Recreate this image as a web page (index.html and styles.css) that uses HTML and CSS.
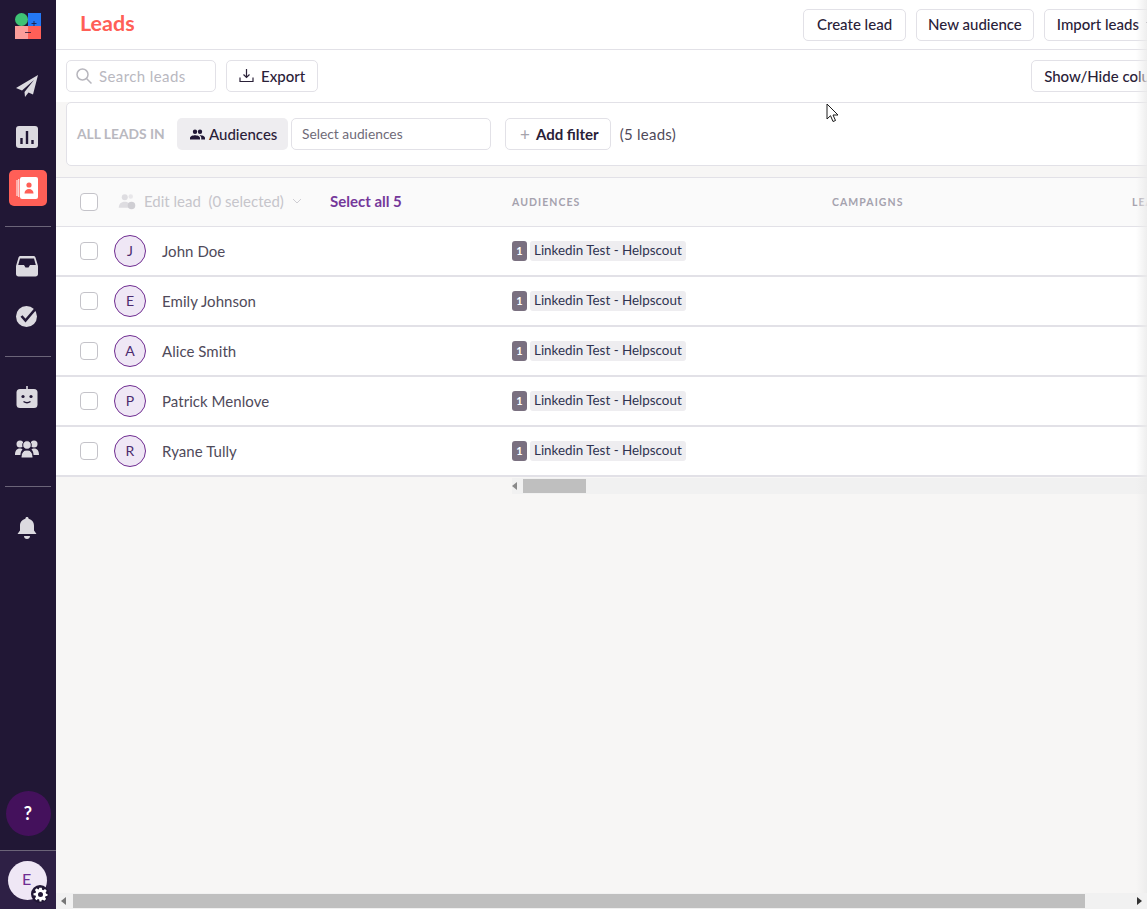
FILE: index.html
```html
<!DOCTYPE html>
<html lang="en">
<head>
    <meta charset="UTF-8">
    <meta name="viewport" content="width=device-width, initial-scale=1.0">
    <title>Leads</title>
    <link rel="stylesheet" href="styles.css">
</head>
<body>
<div class="app">
    <nav class="sidebar">
        <div class="logo">
            <svg width="26" height="26" viewBox="0 0 26 26">
                <rect x="0" y="13" width="13" height="13" fill="#fb9d9a"/>
                <rect x="13" y="13" width="13" height="13" fill="#ff5f57"/>
                <rect x="13" y="0" width="13" height="13" fill="#2478f5"/>
                <circle cx="6.500" cy="6.500" r="6.500" fill="#3ec274"/>
                <path d="M19 8v5M16.500 10.500h5M10 19.500h6" stroke="#211735" stroke-width="0.800" fill="none"/>
            </svg>
        </div>
        <div class="nav-group nav-group-first">
            <a class="nav-item">
                <svg width="24" height="24" viewBox="0 0 24 24"><path fill="#dcdae0" d="M23 1 1 14l6 2.500L19 6 9.500 18 10 23l3.500-4.500 4.500 2z"/></svg>
            </a>
            <a class="nav-item">
                <svg width="24" height="24" viewBox="0 0 24 24"><rect x="1" y="1" width="22" height="22" rx="3" fill="#dcdae0"/><path d="M6.500 19v-6M12 19V6M17.500 19v-4" stroke="#211735" stroke-width="2.400" fill="none"/></svg>
            </a>
            <a class="nav-item">
                <span class="nav-active">
                    <svg width="24" height="24" viewBox="0 0 24 24"><rect x="4" y="1" width="18" height="22" rx="2" fill="#fff"/><path d="M1 4v16M2.800 3v18" stroke="#fff" stroke-width="1"/><circle cx="13" cy="9" r="2.600" fill="#ff5f57"/><path d="M8.500 17.500c0-3 2-4.500 4.500-4.500s4.500 1.500 4.500 4.500z" fill="#ff5f57"/></svg>
                </span>
            </a>
        </div>
        <div class="nav-group nav-group-second">
            <a class="nav-item nav-item-short">
                <svg width="24" height="24" viewBox="0 0 24 24"><path fill="#dcdae0" d="M5.500 2h13c1 0 1.700.6 2 1.500L23 12v8c0 1.500-1 2.500-2.500 2.500h-17C2 22.500 1 21.500 1 20v-8l2.500-8.500C3.800 2.600 4.500 2 5.500 2zM5 4.500 3.200 11H9l1.500 2.500h3L15 11h5.800L19 4.500z"/></svg>
            </a>
            <a class="nav-item nav-item-short">
                <svg width="24" height="24" viewBox="0 0 24 24"><circle cx="11.500" cy="12.500" r="10.500" fill="#dcdae0"/><path d="m6.500 12 4 4.500L22.500 2.500" stroke="#211735" stroke-width="2.600" fill="none"/></svg>
            </a>
        </div>
        <div class="nav-group nav-group-third">
            <a class="nav-item">
                <svg width="24" height="24" viewBox="0 0 24 24"><rect x="11.200" y="0" width="1.600" height="4" fill="#dcdae0"/><rect x="1.500" y="3" width="21" height="19" rx="3.500" fill="#dcdae0"/><circle cx="8" cy="10.500" r="1.600" fill="#211735"/><circle cx="16" cy="10.500" r="1.600" fill="#211735"/><path d="M8.500 15.500c2 1.500 5 1.500 7 0" stroke="#211735" stroke-width="1.400" fill="none"/></svg>
            </a>
            <a class="nav-item">
                <svg width="24" height="24" viewBox="0 0 24 24"><circle cx="5" cy="7" r="3.500" fill="#dcdae0"/><circle cx="19" cy="7" r="3.500" fill="#dcdae0"/><path d="M0 18c0-4 1.500-6.500 5-6.500 1 0 2 .2 2.500.7C6 14 5.500 16 5.500 18zM24 18c0-4-1.500-6.500-5-6.500-1 0-2 .2-2.500.7 1.500 1.800 2 3.800 2 5.800z" fill="#dcdae0"/><circle cx="12" cy="8" r="4.300" stroke="#211735" fill="#dcdae0"/><path d="M6 21c0-5 2-8 6-8s6 3 6 8z" stroke="#211735" fill="#dcdae0"/></svg>
            </a>
        </div>
        <div class="nav-group nav-group-last">
            <a class="nav-item">
                <svg width="24" height="24" viewBox="0 0 24 24"><path fill="#dcdae0" d="M12 1c1 0 1.600.7 1.600 1.700 3.400.8 5.400 3.500 5.400 7v4.800l2.500 3.500H2.500L5 14.500V9.700c0-3.500 2-6.200 5.400-7C10.400 1.700 11 1 12 1zM9 20h6c0 1.700-1.300 3-3 3s-3-1.300-3-3z"/></svg>
            </a>
        </div>
        <div class="help-wrap">
            <span class="help">?</span>
        </div>
        <div class="user-box">
            <span class="user-avatar">E</span>
            <span class="user-gear">
                <svg width="15" height="15" viewBox="0 0 24 24"><path fill="#fff" fill-rule="evenodd" d="M10 1h4l.6 3.200 1.900.8 2.700-1.800 2.800 2.800-1.800 2.700.8 1.900L23.200 11v3l-3.200.6-.8 1.900 1.800 2.700-2.800 2.800-2.700-1.800-1.900.8L13.500 23h-3l-.6-3-1.900-.8-2.700 1.800L3 18.200l1.800-2.700-.8-1.900L.8 13V10l3.200-.6.8-1.900L3 4.800 5.800 2l2.700 1.800 1-.6zM12 8a4 4 0 1 0 0 8 4 4 0 0 0 0-8z"/></svg>
            </span>
        </div>
    </nav>

    <main class="main">
        <div class="content">
            <header class="topbar">
                <h1>Leads</h1>
                <div class="topbar-actions">
                    <button class="btn btn-create">Create lead</button>
                    <button class="btn btn-audience">New audience</button>
                    <button class="btn btn-import">Import leads
                        <svg width="10" height="6" viewBox="0 0 10 6"><path d="m1 1 4 4 4-4" fill="none" stroke="#2a2138"/></svg>
                    </button>
                </div>
            </header>

            <div class="tools">
                <div class="search">
                    <svg width="18" height="18" viewBox="0 0 18 18"><circle cx="7.500" cy="7.500" r="5.500" fill="none" stroke="#b7b6bd" stroke-width="1.500"/><path d="m11.500 11.500 5 5" stroke="#b7b6bd" stroke-width="1.500"/></svg>
                    <span>Search leads</span>
                </div>
                <button class="btn btn-tool">
                    <svg width="15" height="15" viewBox="0 0 15 15"><path d="M7.500 1v8M4.500 6.500l3 3 3-3M1 9.500V13.500h13V9.500" fill="none" stroke="#2a2138" stroke-width="1.200"/></svg>
                    Export
                </button>
                <button class="btn btn-tool btn-columns">Show/Hide columns</button>
            </div>

            <section class="filters">
                <span class="filters-label">ALL LEADS IN</span>
                <span class="filter-type">
                    <svg width="15" height="15" viewBox="0 0 24 24"><path fill="#211735" d="M16 11a3.500 3.500 0 1 0 0-7 3.500 3.500 0 0 0 0 7zM8 11a3.500 3.500 0 1 0 0-7 3.500 3.500 0 0 0 0 7zm0 2c-2.700 0-8 1.300-8 4v3h16v-3c0-2.700-5.300-4-8-4zm8 0h-1c1.500 1 3 2.300 3 4v3h6v-3c0-2.700-5.300-4-8-4z"/></svg>
                    Audiences
                </span>
                <span class="filter-select">Select audiences</span>
                <button class="btn btn-filter"><span class="plus">+</span> Add filter</button>
                <span class="filter-count">(5 leads)</span>
            </section>

            <section class="table">
                <div class="row row-head">
                    <span class="check"></span>
                    <span class="bulk">
                        <svg width="18" height="18" viewBox="0 0 24 24"><circle cx="9" cy="7" r="4" fill="#dedde1"/><circle cx="17" cy="6" r="3" fill="#e8e7ea"/><path d="M1 21c0-5 3-8 8-8s8 3 8 8z" fill="#dedde1"/><circle cx="18" cy="18" r="5" fill="#cfced3"/></svg>
                        Edit lead &nbsp;(0 selected)
                        <svg width="10" height="6" viewBox="0 0 10 6"><path d="m1 1 4 4 4-4" fill="none" stroke="#cfced3"/></svg>
                    </span>
                    <a class="select-all">Select all 5</a>
                    <span class="col-head col-audiences">AUDIENCES</span>
                    <span class="col-head col-campaigns">CAMPAIGNS</span>
                    <span class="col-head">LEAD STATUS</span>
                </div>

                <div class="row">
                    <span class="check"></span>
                    <span class="avatar">J</span>
                    <span class="name">John Doe</span>
                    <span class="audience"><b>1</b><em>Linkedin Test - Helpscout</em></span>
                </div>
                <div class="row">
                    <span class="check"></span>
                    <span class="avatar">E</span>
                    <span class="name">Emily Johnson</span>
                    <span class="audience"><b>1</b><em>Linkedin Test - Helpscout</em></span>
                </div>
                <div class="row">
                    <span class="check"></span>
                    <span class="avatar">A</span>
                    <span class="name">Alice Smith</span>
                    <span class="audience"><b>1</b><em>Linkedin Test - Helpscout</em></span>
                </div>
                <div class="row">
                    <span class="check"></span>
                    <span class="avatar">P</span>
                    <span class="name">Patrick Menlove</span>
                    <span class="audience"><b>1</b><em>Linkedin Test - Helpscout</em></span>
                </div>
                <div class="row">
                    <span class="check"></span>
                    <span class="avatar">R</span>
                    <span class="name">Ryane Tully</span>
                    <span class="audience"><b>1</b><em>Linkedin Test - Helpscout</em></span>
                </div>
            </section>

            <div class="table-scroll">
                <span class="arrow-left"></span>
                <span class="table-thumb"></span>
            </div>
        </div>

        <div class="page-scroll">
            <span class="arrow-left"></span>
            <span class="page-thumb"></span>
            <span class="arrow-right"></span>
        </div>
    </main>
</div>

<div class="edge-fade"></div>
<svg class="cursor" width="13" height="20" viewBox="0 0 13 20"><path d="M1 1v15l3.500-3.300L7 18.500l2.500-1L7 12h5z" fill="#fff" stroke="#1a1a1a" stroke-width="1"/></svg>
</body>
</html>
```

FILE: styles.css
```css
:root {
    --dark: #211735;
    --text: #2a2138;
    --muted: #4f4a5a;
    --line: #e2e1e7;
    --coral: #ff5f57;
    --purple: #6f2c91;
}

html, body {
    height: 100%;
    margin: 0;
    overflow: hidden;
}

body {
    font-family: Lato, "Open Sans", sans-serif;
    font-size: 14px;
    color: var(--text);
    background-color: #f7f6f5;
}

.app {
    display: flex;
    height: 100%;
}

/* left menu */
.sidebar {
    display: flex;
    flex-direction: column;
    flex: 0 0 56px;
    background-color: var(--dark);
}

.logo {
    display: flex;
    justify-content: center;
    height: 47px;
    padding-top: 13px;
    box-sizing: border-box;
}

.nav-group {
    margin: 0 5px;
    border-bottom: 1px solid #6b6478;
}

.nav-group-first {
    padding: 13px 0;
}

.nav-group-second {
    padding: 14px 0 15px;
}

.nav-group-third {
    padding: 15px 0 12px;
}

.nav-group-last {
    padding-top: 15px;
    border-bottom: none;
}

.nav-item {
    display: flex;
    justify-content: center;
    align-items: center;
    height: 51px;
    margin: 0 -1px;
}

.nav-item-short {
    height: 50px;
}

.nav-item > svg {
    margin-right: 2px;
}

.nav-active {
    display: flex;
    justify-content: center;
    align-items: center;
    width: 38px;
    height: 36px;
    border-radius: 5px;
    background-color: var(--coral);
}

.help-wrap {
    display: flex;
    justify-content: center;
    margin-top: auto;
    padding-bottom: 14px;
}

.help {
    width: 45px;
    height: 45px;
    line-height: 45px;
    border-radius: 50%;
    background-color: #44115c;
    color: #fff;
    font-weight: 700;
    font-size: 18px;
    text-align: center;
}

.user-box {
    position: relative;
    height: 59px;
    padding: 10px 0 0 8px;
    box-sizing: border-box;
    background-color: #2e2045;
    border-top: 1px solid #6b6478;
}

.user-avatar {
    display: block;
    width: 39px;
    height: 39px;
    line-height: 36px;
    border-radius: 50%;
    background-color: #efe7f5;
    color: var(--purple);
    font-size: 16px;
    text-indent: -2px;
    text-align: center;
}

.user-gear {
    position: absolute;
    left: 31px;
    bottom: 6px;
    display: flex;
    justify-content: center;
    align-items: center;
    width: 18px;
    height: 18px;
    border-radius: 50%;
    background-color: var(--dark);
}

/* main area */
.main {
    display: flex;
    flex-direction: column;
    flex: 1;
    min-width: 0;
    overflow: hidden;
}

.content {
    flex: 1;
    width: 1320px;
}

.topbar {
    display: flex;
    align-items: center;
    height: 50px;
    box-sizing: border-box;
    padding-left: 24px;
    background-color: #fff;
    border-bottom: 1px solid var(--line);
}

h1 {
    flex: 0 0 723px;
    margin: 0 0 3px;
    color: var(--coral);
    font-size: 21.500px;
    font-weight: 700;
}

.topbar-actions {
    display: flex;
    gap: 10px;
}

.btn {
    display: inline-flex;
    align-items: center;
    justify-content: center;
    height: 32px;
    padding: 0 12px 1px;
    box-sizing: border-box;
    background-color: #fff;
    border: 1px solid var(--line);
    border-radius: 5px;
    color: var(--text);
    font-family: inherit;
    font-size: 15px;
    font-weight: 500;
    white-space: nowrap;
}

.btn-create {
    padding: 0 13px 2px;
}

.btn-audience {
    padding: 0 11px 2px;
}

.btn-import {
    gap: 6px;
    padding-bottom: 2px;
}

.tools {
    display: flex;
    align-items: center;
    height: 52px;
    box-sizing: border-box;
    padding: 10px 0 10px 10px;
    background-color: #fff;
}

.search {
    display: flex;
    align-items: center;
    gap: 6px;
    width: 150px;
    height: 32px;
    box-sizing: border-box;
    padding-left: 8px;
    border: 1px solid var(--line);
    border-radius: 5px;
    color: #b9b8bf;
    font-size: 15px;
    letter-spacing: 0.400px;
}

.btn-tool {
    gap: 7px;
    margin-left: 10px;
}

.btn-columns {
    margin-left: 713px;
}

.filters {
    display: flex;
    align-items: center;
    height: 64px;
    box-sizing: border-box;
    margin-left: 10px;
    padding-left: 10px;
    background-color: #fff;
    border: 1px solid var(--line);
    border-radius: 5px;
}

.filters-label {
    width: 100px;
    padding-bottom: 1px;
    color: #b9b8bf;
    font-weight: 700;
    font-size: 13.800px;
}

.filter-type {
    display: flex;
    align-items: center;
    gap: 4px;
    width: 111px;
    height: 32px;
    box-sizing: border-box;
    padding-left: 13px;
    border-radius: 5px;
    background-color: #eeedf0;
    font-size: 15px;
    font-weight: 500;
}

.filter-select {
    display: flex;
    align-items: center;
    width: 200px;
    height: 32px;
    box-sizing: border-box;
    margin-left: 3px;
    padding: 0 0 1px 10px;
    border: 1px solid var(--line);
    border-radius: 5px;
    color: #6f6b78;
    font-size: 13.800px;
}

.btn-filter {
    gap: 6px;
    margin-left: 14px;
    padding: 0 11px 0 14px;
    font-weight: 700;
}

.plus {
    color: #a5a4ac;
    font-size: 17px;
    font-weight: 400;
}

.filter-count {
    margin-left: 9px;
    color: var(--muted);
    font-size: 15px;
    letter-spacing: 0.250px;
}

/* leads table */
.table {
    margin-top: 11px;
    background-color: #fff;
    border-top: 1px solid var(--line);
}

.row {
    display: flex;
    align-items: center;
    height: 50px;
    box-sizing: border-box;
    padding-left: 24px;
    border-bottom: 2px solid var(--line);
}

.row-head {
    height: 49px;
    background-color: #fafafa;
    border-bottom-width: 1px;
}

.check {
    flex: 0 0 18px;
    height: 18px;
    box-sizing: border-box;
    border: 1px solid #c4c3c9;
    border-radius: 4px;
    background-color: #fff;
}

.bulk {
    display: flex;
    align-items: center;
    gap: 8px;
    width: 212px;
    margin-left: 20px;
    padding-bottom: 2px;
    color: #c6c5cb;
    font-size: 15px;
}

.select-all {
    width: 182px;
    padding-bottom: 2px;
    color: #75389a;
    font-size: 15px;
    font-weight: 700;
}

.col-head {
    color: #a5a2ae;
    font-size: 10.500px;
    font-weight: 700;
    letter-spacing: 1.050px;
    white-space: nowrap;
}

.col-audiences {
    width: 320px;
}

.col-campaigns {
    width: 300px;
}

.avatar {
    flex: 0 0 32px;
    height: 32px;
    box-sizing: border-box;
    margin-left: 16px;
    line-height: 30px;
    border: 1px solid var(--purple);
    border-radius: 50%;
    background-color: #efe7f5;
    color: #4b2a6e;
    font-size: 14px;
    text-align: center;
}

.name {
    width: 350px;
    margin-left: 16px;
    padding-bottom: 1px;
    color: var(--muted);
    font-size: 15px;
    letter-spacing: 0.050px;
}

.audience {
    display: flex;
    align-items: center;
    gap: 3px;
}

.audience b {
    width: 15px;
    height: 20px;
    line-height: 20px;
    border-radius: 3px;
    background-color: #7a7080;
    color: #fff;
    font-size: 11px;
    text-align: center;
}

.audience em {
    padding: 0 4px;
    height: 20px;
    line-height: 19px;
    border-radius: 3px;
    background-color: #eeedf0;
    color: #2e3350;
    font-size: 13.400px;
    font-style: normal;
}

.table-scroll {
    display: flex;
    align-items: center;
    height: 16px;
    margin: 1px 0 0 456px;
    background-color: #f1f1f1;
}

.table-thumb {
    width: 63px;
    height: 14px;
    margin-left: 6px;
    background-color: #bfbfbf;
}

.arrow-left {
    width: 0;
    height: 0;
    border-top: 4px solid transparent;
    border-bottom: 4px solid transparent;
    border-right: 5px solid #8a8a8a;
}

.page-scroll {
    display: flex;
    align-items: center;
    flex: 0 0 16px;
    background-color: #f1f1f1;
}

.page-scroll .arrow-left {
    margin-left: 5px;
    border-right-color: #777;
}

.page-thumb {
    width: 1012px;
    height: 14px;
    margin-left: 7px;
    background-color: #bfbfbf;
}

.arrow-right {
    width: 0;
    height: 0;
    margin-left: 52px;
    border-top: 4px solid transparent;
    border-bottom: 4px solid transparent;
    border-left: 5px solid #333;
}

/* things lying over the page */
.edge-fade {
    position: absolute;
    top: 0;
    right: 0;
    bottom: 16px;
    width: 11px;
    background: linear-gradient(to right, rgba(235, 235, 235, 0), rgba(235, 235, 235, 0.85));
}

.cursor {
    position: absolute;
    left: 826px;
    top: 103px;
}
```
